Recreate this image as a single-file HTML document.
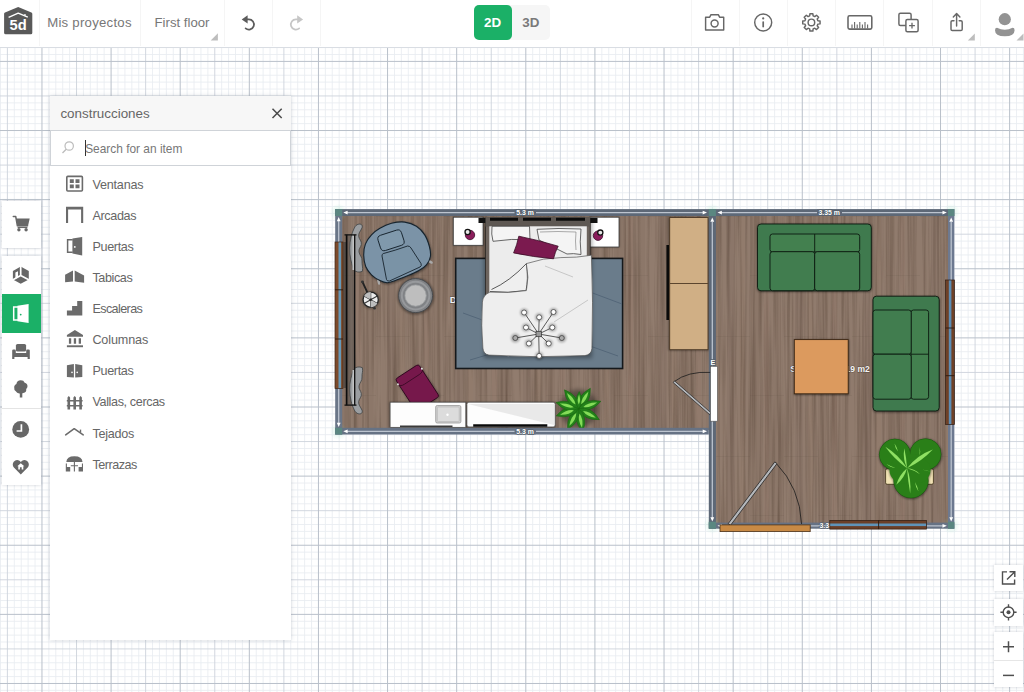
<!DOCTYPE html>
<html lang="es"><head><meta charset="utf-8"><title>Planner 5D</title>
<style>
*{box-sizing:border-box;margin:0;padding:0}
html,body{width:1024px;height:692px;overflow:hidden;background:#fff}
body{position:relative;font-family:"Liberation Sans",sans-serif;color:#777}
svg{display:block}
.grid,.plan{position:absolute;left:0;top:0}
.topbar{position:absolute;left:0;top:0;width:1024px;height:47.6px;background:#fff;border-bottom:1.6px solid #d9dde3}
.topbar .sep{position:absolute;top:0;width:1px;height:46px;background:#f5f5f5}
.topbar .txt{position:absolute;top:15.2px;font-size:13.2px;line-height:16px;color:#777;white-space:nowrap}
.topbar .ico{position:absolute}
.tri{position:absolute;width:0;height:0;border-left:5.5px solid transparent;border-bottom:5.5px solid #bdbdbd}
.mode{position:absolute;left:473.5px;top:5px;width:76.5px;height:34.5px;border-radius:5px;background:#f6f6f6}
.mode .b2{position:absolute;left:0;top:0;width:38.3px;height:34.5px;border-radius:5px;background:#1bb067;color:#fff;font-weight:bold;font-size:13.4px;line-height:36.8px;text-align:center}
.mode .b3{position:absolute;left:38.3px;top:0;width:38.2px;height:34.5px;color:#7a7a7a;font-weight:bold;font-size:13.4px;line-height:36.8px;text-align:center}
.box{position:absolute;background:#fff;box-shadow:0 0 3px rgba(80,90,110,.28)}
.panel{position:absolute;left:49.8px;top:96px;width:240.8px;height:544px;background:#fff;box-shadow:0 0 4px rgba(80,90,110,.25)}
.panel .hd{position:absolute;left:0;top:0;width:100%;height:34px;background:#f7f7f7;color:#666;font-size:13.4px;line-height:16px;padding:10.3px 0 0 10.6px}
.panel .search{position:absolute;left:0;top:33.6px;width:100%;height:36px;border:1px solid #cfd3d8;background:#fff}
.panel .search span{position:absolute;left:34.4px;top:11.1px;font-size:11.9px;line-height:14px;color:#777;white-space:nowrap}
.panel .caret{position:absolute;left:34.3px;top:9px;width:1px;height:16px;background:#333}
.item{position:absolute;left:0;width:100%;height:31px}
.item svg{position:absolute;left:15px;top:6.5px}
.item span{position:absolute;left:42.6px;top:8.8px;font-size:12.6px;line-height:15px;color:#666;white-space:nowrap}

</style></head>
<body>
<svg class="grid" width="1024" height="692" viewBox="0 0 1024 692"><path d="M0.49 46V692M14.31 46V692M21.22 46V692M28.14 46V692M35.05 46V692M48.87 46V692M55.78 46V692M62.70 46V692M69.61 46V692M83.43 46V692M90.34 46V692M97.26 46V692M104.17 46V692M117.99 46V692M124.90 46V692M131.82 46V692M138.73 46V692M152.55 46V692M159.46 46V692M166.38 46V692M173.29 46V692M187.11 46V692M194.02 46V692M200.94 46V692M207.85 46V692M221.67 46V692M228.58 46V692M235.50 46V692M242.41 46V692M256.23 46V692M263.14 46V692M270.06 46V692M276.97 46V692M290.79 46V692M297.70 46V692M304.62 46V692M311.53 46V692M325.35 46V692M332.26 46V692M339.18 46V692M346.09 46V692M359.91 46V692M366.82 46V692M373.74 46V692M380.65 46V692M394.47 46V692M401.38 46V692M408.30 46V692M415.21 46V692M429.03 46V692M435.94 46V692M442.86 46V692M449.77 46V692M463.59 46V692M470.50 46V692M477.42 46V692M484.33 46V692M498.15 46V692M505.06 46V692M511.98 46V692M518.89 46V692M532.71 46V692M539.62 46V692M546.54 46V692M553.45 46V692M567.27 46V692M574.18 46V692M581.10 46V692M588.01 46V692M601.83 46V692M608.74 46V692M615.66 46V692M622.57 46V692M636.39 46V692M643.30 46V692M650.22 46V692M657.13 46V692M670.95 46V692M677.86 46V692M684.78 46V692M691.69 46V692M705.51 46V692M712.42 46V692M719.34 46V692M726.25 46V692M740.07 46V692M746.98 46V692M753.90 46V692M760.81 46V692M774.63 46V692M781.54 46V692M788.46 46V692M795.37 46V692M809.19 46V692M816.10 46V692M823.02 46V692M829.93 46V692M843.75 46V692M850.66 46V692M857.58 46V692M864.49 46V692M878.31 46V692M885.22 46V692M892.14 46V692M899.05 46V692M912.87 46V692M919.78 46V692M926.70 46V692M933.61 46V692M947.43 46V692M954.34 46V692M961.26 46V692M968.17 46V692M981.99 46V692M988.90 46V692M995.82 46V692M1002.73 46V692M1016.55 46V692M1023.46 46V692M0 47.58H1024M0 54.49H1024M0 68.31H1024M0 75.22H1024M0 82.14H1024M0 89.05H1024M0 102.87H1024M0 109.78H1024M0 116.70H1024M0 123.61H1024M0 137.43H1024M0 144.34H1024M0 151.26H1024M0 158.17H1024M0 171.99H1024M0 178.90H1024M0 185.82H1024M0 192.73H1024M0 206.55H1024M0 213.46H1024M0 220.38H1024M0 227.29H1024M0 241.11H1024M0 248.02H1024M0 254.94H1024M0 261.85H1024M0 275.67H1024M0 282.58H1024M0 289.50H1024M0 296.41H1024M0 310.23H1024M0 317.14H1024M0 324.06H1024M0 330.97H1024M0 344.79H1024M0 351.70H1024M0 358.62H1024M0 365.53H1024M0 379.35H1024M0 386.26H1024M0 393.18H1024M0 400.09H1024M0 413.91H1024M0 420.82H1024M0 427.74H1024M0 434.65H1024M0 448.47H1024M0 455.38H1024M0 462.30H1024M0 469.21H1024M0 483.03H1024M0 489.94H1024M0 496.86H1024M0 503.77H1024M0 517.59H1024M0 524.50H1024M0 531.42H1024M0 538.33H1024M0 552.15H1024M0 559.06H1024M0 565.98H1024M0 572.89H1024M0 586.71H1024M0 593.62H1024M0 600.54H1024M0 607.45H1024M0 621.27H1024M0 628.18H1024M0 635.10H1024M0 642.01H1024M0 655.83H1024M0 662.74H1024M0 669.66H1024M0 676.57H1024M0 690.39H1024" stroke="#e8ecf1" stroke-width=".85" fill="none"/><path d="M7.40 46V692M76.52 46V692M145.64 46V692M214.76 46V692M283.88 46V692M353.00 46V692M422.12 46V692M491.24 46V692M560.36 46V692M629.48 46V692M698.60 46V692M767.72 46V692M836.84 46V692M905.96 46V692M975.08 46V692M0 95.96H1024M0 165.08H1024M0 234.20H1024M0 303.32H1024M0 372.44H1024M0 441.56H1024M0 510.68H1024M0 579.80H1024M0 648.92H1024" stroke="#cdd3db" stroke-width=".9" fill="none"/><path d="M41.96 46V692M111.08 46V692M180.20 46V692M249.32 46V692M318.44 46V692M387.56 46V692M456.68 46V692M525.80 46V692M594.92 46V692M664.04 46V692M733.16 46V692M802.28 46V692M871.40 46V692M940.52 46V692M1009.64 46V692M0 61.40H1024M0 130.52H1024M0 199.64H1024M0 268.76H1024M0 337.88H1024M0 407.00H1024M0 476.12H1024M0 545.24H1024M0 614.36H1024M0 683.48H1024" stroke="#b9c0ca" stroke-width="1" fill="none"/></svg>
<svg class="plan" width="1024" height="692" viewBox="0 0 1024 692" font-family="Liberation Sans, sans-serif">
<defs>
  <pattern id="wood" width="68" height="120" patternUnits="userSpaceOnUse" x="342" y="216">
    <rect width="68" height="120" fill="#907b6d"/>
    <rect x="0" width="9" height="120" fill="#7f6b5d" opacity=".3"/>
    <rect x="14" width="5" height="120" fill="#92796a" opacity=".3"/>
    <rect x="24" width="7" height="120" fill="#806b5e" opacity=".28"/>
    <rect x="36" width="4" height="120" fill="#947c6d" opacity=".28"/>
    <rect x="45" width="8" height="120" fill="#7e695c" opacity=".28"/>
    <rect x="58" width="5" height="120" fill="#917868" opacity=".28"/>
    <rect x="0" y="59" width="34" height="1" fill="#7a6658" opacity=".28"/>
    <rect x="34" y="0" width="34" height="1" fill="#7a6658" opacity=".28"/>
  </pattern>
  <radialGradient id="halo"><stop offset="0" stop-color="#7fd6b0" stop-opacity=".3"/><stop offset="1" stop-color="#7fd6b0" stop-opacity="0"/></radialGradient>
  <filter id="sh" x="-20%" y="-20%" width="140%" height="140%"><feGaussianBlur stdDeviation="1.2"/></filter>
  <filter id="sh2" x="-30%" y="-30%" width="160%" height="160%"><feGaussianBlur stdDeviation="2"/></filter>
  <filter id="grain" x="0" y="0" width="100%" height="100%" color-interpolation-filters="sRGB">
    <feTurbulence type="fractalNoise" baseFrequency="0.32 0.006" numOctaves="3" seed="7" result="n"/>
    <feColorMatrix in="n" type="matrix" values="0 0 0 0 0.25  0 0 0 0 0.18  0 0 0 0 0.13  0.75 0 0 0 -0.3"/>
    <feComposite in2="SourceGraphic" operator="in"/>
  </filter>
</defs>
<!-- floors -->
<rect x="340" y="214" width="372" height="216" fill="url(#wood)"/>
<rect x="712" y="214" width="239" height="312" fill="url(#wood)"/>
<rect x="340" y="214" width="372" height="216" fill="#fff" filter="url(#grain)"/>
<rect x="712" y="214" width="239" height="312" fill="#fff" filter="url(#grain)"/>
<g font-size="9.5" font-weight="bold" fill="#f4f4f4" stroke="#5a4a40" stroke-width=".9" paint-order="stroke">
<text x="449.7" y="302.8">D</text>
<text x="790.2" y="372">S</text>
<text x="845.6" y="372" textLength="24.2" lengthAdjust="spacingAndGlyphs">19 m2</text>
</g>
<!-- curtains & rod -->
<g>
<rect x="343.500" y="242" width="2.500" height="146" fill="#333" opacity=".55"/><rect x="346.400" y="234.700" width="8.500" height="170.600" fill="#4c4c4c" opacity=".42"/>
<g fill="#9b9ea1" stroke="#3f4244" stroke-width=".8">
<path d="M358 224.300c3.200-.9 5 1 4 3.600c-1.400 3.200-3.800 5.200-3.300 8.600c.4 3 3.200 4.400 2.600 8c-.5 3-2.800 4.200-2.300 7.500c.5 3.500 3.400 5 3 9c-.3 3.500 1.200 6.500 .4 10.300c-3 1.500-6.600 .8-8.400-1.300c-2.500-6-4.600-14-4.300-22c.2-8 2-15 4.600-20c1-2 2.300-3.200 3.700-3.700z"/>
<path d="M358 413.700c3.200 .9 5-1 4-3.600c-1.400-3.200-3.800-5.200-3.300-8.600c.4-3 3.200-4.400 2.600-8c-.5-3-2.800-4.200-2.300-7.500c.5-3.500 3.400-5 3-9c-.3-3.500 1.200-5.500 .4-9.300c-3-1.500-6.600-.8-8.400 1.300c-2.500 6-4.600 13-4.300 21c.2 8 2 15 4.600 20c1 2 2.300 3.200 3.700 3.700z"/>
</g>
<path d="M353.600 236v34M353.600 370v34" stroke="#c2c3c4" stroke-width="2.200"/>
<path d="M346.600 234.700V405.300" stroke="#0c0c0c" stroke-width="1.700"/><path d="M354.700 234.700V405.300" stroke="#0c0c0c" stroke-width="1.300"/>
<path d="M344.500 234.900h12M344.500 405.100h12" stroke="#111" stroke-width="1.300"/>
</g>
<!-- armchair -->
<g>
<path d="M363.7 254.9C363.7 251.1 364.1 247.4 365.4 244.1C366.7 240.7 369.1 237.5 371.5 234.9C374.0 232.3 376.5 230.2 379.9 228.3C383.2 226.3 387.3 224.3 391.5 223.3C395.6 222.3 400.6 221.6 404.8 222.1C408.9 222.6 413.1 224.1 416.4 226.3C419.7 228.4 422.6 231.5 424.7 234.9C426.9 238.3 428.4 242.9 429.4 246.5C430.3 250.1 430.9 253.5 430.4 256.5C429.9 259.6 428.3 262.5 426.4 264.8C424.5 267.2 422.0 268.8 418.9 270.6C415.9 272.4 411.9 274.1 408.1 275.6C404.4 277.2 399.9 278.9 396.5 280.1C393.0 281.3 390.1 282.7 387.3 282.8C384.6 282.9 382.5 281.9 379.9 280.6C377.2 279.3 373.9 277.2 371.5 274.8C369.2 272.4 367.0 269.8 365.7 266.5C364.4 263.2 363.8 258.6 363.7 254.9Z" transform="translate(.6 1)" fill="#000" stroke="#000" stroke-width="1.5" opacity=".4" filter="url(#sh)"/>
<path d="M428.600 260.800l3 1.800M378.300 280.500l.8 3" stroke="#a9a9a9" stroke-width="2.400" stroke-linecap="round"/>
<path d="M363.7 254.9C363.7 251.1 364.1 247.4 365.4 244.1C366.7 240.7 369.1 237.5 371.5 234.9C374.0 232.3 376.5 230.2 379.9 228.3C383.2 226.3 387.3 224.3 391.5 223.3C395.6 222.3 400.6 221.6 404.8 222.1C408.9 222.6 413.1 224.1 416.4 226.3C419.7 228.4 422.6 231.5 424.7 234.9C426.9 238.3 428.4 242.9 429.4 246.5C430.3 250.1 430.9 253.5 430.4 256.5C429.9 259.6 428.3 262.5 426.4 264.8C424.5 267.2 422.0 268.8 418.9 270.6C415.9 272.4 411.9 274.1 408.1 275.6C404.4 277.2 399.9 278.9 396.5 280.1C393.0 281.3 390.1 282.7 387.3 282.8C384.6 282.9 382.5 281.9 379.9 280.6C377.2 279.3 373.9 277.2 371.5 274.8C369.2 272.4 367.0 269.8 365.7 266.5C364.4 263.2 363.8 258.6 363.7 254.9Z" fill="#7b93a7" stroke="#17242e" stroke-width="1.100"/>
<rect x="-12.300" y="-8" width="24.600" height="16" rx="4" transform="translate(391 240.300) rotate(-17.800)" fill="#8099ac" stroke="#17242e" stroke-width=".9"/>
<path d="M383.200 253.600Q395 250.500 407.600 246Q410 246 411 248L421 263.500Q422 266 420 267L389.500 281Q387 281.500 386.500 279.500L382 256Q381.800 254.200 383.200 253.600Z" fill="#7a93a6" stroke="#17242e" stroke-width=".9"/>
</g>
<!-- pouf -->
<g>
<circle cx="415.800" cy="296.200" r="18.500" fill="#000" opacity=".35" filter="url(#sh)"/>
<circle cx="415.600" cy="295.600" r="17" fill="#808285" stroke="#4a4c4f" stroke-width="1"/>
<circle cx="415.600" cy="295.600" r="13.800" fill="none" stroke="#97999c" stroke-width="2"/>
<circle cx="415.600" cy="295.600" r="10.600" fill="#bebebe" stroke="#a2a4a6" stroke-width=".8"/>
</g>
<!-- floor lamp -->
<g>
<circle cx="370.900" cy="299.900" r="9" fill="#000" opacity=".3" filter="url(#sh)"/>
<path d="M362.300 281.500L370.700 299.700" stroke="#222" stroke-width="1.800"/>
<circle cx="362.400" cy="281.800" r="1.400" fill="#333"/>
<circle cx="370.700" cy="299.700" r="7.600" fill="#ededed" stroke="#262626" stroke-width="1.300"/>
<path d="M370.700 292.100V307.300M364.100 295.900L377.300 303.500M364.100 303.500L377.300 295.900" stroke="#3a3a3a" stroke-width="1.100"/>
<path d="M370.700 299.700L364.100 295.900A7.600 7.600 0 0 1 370.700 292.100ZM370.700 299.700L377.300 303.500A7.600 7.600 0 0 1 370.700 307.300Z" fill="#bdbdbd"/>
<circle cx="370.700" cy="299.700" r="1.300" fill="#222"/>
<circle cx="374.500" cy="308.200" r="1.300" fill="#333"/>
</g>
<!-- rug -->
<g>
<rect x="455.700" y="258.400" width="166.900" height="110.100" fill="#6a7c8b" stroke="#15181b" stroke-width="1.600"/>
<path d="M463 313l22 8M590 292l32 12M590 346l28 10M470 360l20-6" stroke="#4f6275" stroke-width="1" opacity=".8"/>
</g>
<!-- nightstands -->
<g>
<rect x="453" y="217.200" width="30.300" height="28.300" fill="#000" opacity=".35" filter="url(#sh)"/>
<rect x="453.300" y="217.200" width="29.800" height="28.100" fill="#fff" stroke="#3a3a3a" stroke-width=".8"/>
<rect x="589.400" y="217.200" width="30" height="30" fill="#000" opacity=".35" filter="url(#sh)"/>
<rect x="589.700" y="217.200" width="29.300" height="29.800" fill="#fff" stroke="#3a3a3a" stroke-width=".8"/>
<circle cx="470" cy="235" r="4.700" fill="#8b1d5c" stroke="#3a0d28" stroke-width=".8"/>
<circle cx="467.600" cy="232" r="2.600" fill="#e8e8e8" stroke="#111" stroke-width="1.300"/>
<circle cx="598" cy="235.700" r="4.700" fill="#8b1d5c" stroke="#3a0d28" stroke-width=".8"/>
<circle cx="600.300" cy="232.600" r="2.600" fill="#e8e8e8" stroke="#111" stroke-width="1.300"/>
</g>
<!-- bed -->
<g>
<rect x="484" y="218" width="108" height="140" fill="#000" opacity=".35" filter="url(#sh2)"/>
<rect x="485.500" y="218.300" width="104.700" height="120" fill="#6d645e" stroke="#2b2724" stroke-width=".8"/>
<rect x="478.500" y="217.800" width="8" height="5.200" fill="#111"/><rect x="589.500" y="217.800" width="8" height="5.200" fill="#111"/>
<rect x="485.500" y="217" width="104.700" height="9.600" fill="#5e5853"/>
<path d="M490 219.200h28M523 219.200h28M556 219.200h29" stroke="#0c0c0c" stroke-width="3"/>
<rect x="489.300" y="226.300" width="97.500" height="112" fill="#ececec"/>
<!-- pillows -->
<path d="M492 226.300h37.500l.5 13.500q-18 -1.500-37 1.500q-2-7-1-15z" fill="#f4f4f4" stroke="#444" stroke-width=".8"/>
<path d="M537 229.300q22-1.500 44 -.3q-1.500 13 0 25.500q-8-1.500-14-.5l-28 -14z" fill="#f4f4f4" stroke="#444" stroke-width=".8"/>
<path d="M540 232q18-1 36 0q-1 9 0 18" fill="none" stroke="#777" stroke-width=".6"/>
<!-- sheet fold lines -->
<path d="M491.500 289.500q18-8 35-26q2 16-.5 27q-18 3-36 1" fill="#efefef" stroke="#333" stroke-width=".8"/>
<!-- duvet -->
<path d="M590.900 255.300q-14 2.500-30 2.300q-18 .2-34.500 6q3 14 0 27q-18 3-36.500 1.500q-7 3-7.500 10q-1.500 24 .5 46q.5 6 6 7q48 3 96 .5q6.500-1 7-7q1.500-46-.5-93z" fill="#eeeeee" stroke="#555" stroke-width=".7"/>
<path d="M545 266l28 11M588 300l-34 22" stroke="#bdbdbd" stroke-width=".8" fill="none"/>
<!-- purple pillow -->
<path d="M518.800 236.200Q538 240 558.200 246.200Q555 252 553.500 258.800Q533 257 513.600 252.900Q517 245 518.800 236.200Z" fill="#7b1a4f" stroke="#3a0d26" stroke-width=".8"/>
</g>
<!-- chandelier -->
<g>
<g fill="#000" opacity=".28" filter="url(#sh)">
<circle cx="524.100" cy="312.500" r="4"/><circle cx="539.200" cy="317.300" r="4"/><circle cx="553.500" cy="312" r="4"/><circle cx="526" cy="327.500" r="4"/><circle cx="552.300" cy="327.500" r="4"/><circle cx="515.300" cy="338" r="4.500"/><circle cx="561.800" cy="338" r="4.500"/><circle cx="528.900" cy="343.500" r="4"/><circle cx="548.700" cy="343.500" r="4"/><circle cx="539.200" cy="355.900" r="4"/>
</g>
<path d="M538.700 334L524.100 312.500M538.700 334L539.200 317.300M538.700 334L553.500 312M538.700 334L526 327.500M538.700 334L552.300 327.500M538.700 334L515.300 338M538.700 334L561.800 338M538.700 334L528.900 343.500M538.700 334L548.700 343.500M538.700 334L539.200 355.900" stroke="#333" stroke-width=".8" fill="none"/>
<rect x="536" y="331.300" width="5.400" height="5.400" fill="#999" stroke="#333" stroke-width=".7"/>
<g fill="#fff" stroke="#333" stroke-width=".7">
<circle cx="524.100" cy="312.500" r="2.500"/><circle cx="539.200" cy="317.300" r="2.500"/><circle cx="553.500" cy="312" r="2.500"/><circle cx="526" cy="327.500" r="2.500"/><circle cx="552.300" cy="327.500" r="2.500"/><circle cx="528.900" cy="343.500" r="2.500"/><circle cx="548.700" cy="343.500" r="2.500"/><circle cx="539.200" cy="355.900" r="2.500"/>
</g>
<circle cx="515.300" cy="338" r="2.500" fill="#aaa" stroke="#333" stroke-width=".7"/><circle cx="561.800" cy="338" r="2.500" fill="#aaa" stroke="#333" stroke-width=".7"/>
</g>
<!-- purple chair -->
<g transform="translate(417.300 387.800) rotate(-33)">
<rect x="-14" y="-18.700" width="28.500" height="39" rx="2.500" fill="#000" opacity=".4" filter="url(#sh)"/>
<rect x="-13.800" y="-19.200" width="27.600" height="38.400" rx="2.500" fill="#76184b" stroke="#320a20" stroke-width=".9"/>
<path d="M-13.800-11.500q2.500 1.800 5 1.500h17.600q2.500.3 5-1.500" fill="none" stroke="#3f0b28" stroke-width=".9"/>
<circle cx="-14.300" cy="-13.500" r="1" fill="#ddd"/><circle cx="14.300" cy="-13.500" r="1" fill="#ddd"/>
</g>
<!-- desk + tv stand -->
<g>
<rect x="389.500" y="402" width="166.500" height="26.500" fill="#000" opacity=".4" filter="url(#sh)"/>
<rect x="390.100" y="402.200" width="75.700" height="25.100" fill="#fdfdfd" stroke="#4a4a4a" stroke-width=".7"/>
<path d="M400 426.300H452.500" stroke="#3a3a3a" stroke-width="1.600"/>
<rect x="435.700" y="405.500" width="25.200" height="17.500" rx="1.500" fill="#cfcfcf" stroke="#9a9a9a" stroke-width=".8"/>
<rect x="437.400" y="407" width="21.800" height="14.500" rx="1" fill="#dcdcdc" stroke="#b5b5b5" stroke-width=".6"/>
<circle cx="447.500" cy="414.700" r="1.200" fill="#fff"/>
<rect x="466.900" y="402.200" width="88.300" height="24.700" rx="2" fill="#fdfdfd" stroke="#4a4a4a" stroke-width=".7"/>
<path d="M468 404l86 21v-21z" fill="#d9d9d9" opacity=".55"/>
<path d="M473.200 425.500H547.300" stroke="#0a0a0a" stroke-width="2.600"/>
</g>
<!-- plant 1 (spiky) -->
<g transform="translate(578.600 408.600)">
<circle r="19" fill="#000" opacity=".35" filter="url(#sh2)"/>
<g fill="#23801a" stroke="#1a6410" stroke-width=".5">
<path d="M0 0Q-8.5-9.500 0-23.500Q8.500-9.500 0 0Z" transform="rotate(30)"/><path d="M0 0Q-8.5-9.500 0-23.500Q8.500-9.500 0 0Z" transform="rotate(72)"/><path d="M0 0Q-8.5-9.500 0-23.500Q8.500-9.500 0 0Z" transform="rotate(118)"/><path d="M0 0Q-8.5-9.500 0-23.500Q8.500-9.500 0 0Z" transform="rotate(170)"/><path d="M0 0Q-8.5-9.500 0-23.500Q8.500-9.500 0 0Z" transform="rotate(208)"/><path d="M0 0Q-8.5-9.500 0-23.500Q8.500-9.500 0 0Z" transform="rotate(252)"/><path d="M0 0Q-8.5-9.500 0-23.500Q8.500-9.500 0 0Z" transform="rotate(285)"/><path d="M0 0Q-8.5-9.500 0-23.500Q8.500-9.500 0 0Z" transform="rotate(323)"/><path d="M0 0Q-6-7 0-17Q6-7 0 0Z" transform="rotate(2)"/>
</g>
<g fill="#84dc58">
<path d="M0-5Q-3.300-11 0-19.500Q3.300-11 0-5Z" transform="rotate(30)"/><path d="M0-5Q-3.300-11 0-19.500Q3.300-11 0-5Z" transform="rotate(72)"/><path d="M0-5Q-3.300-11 0-19.500Q3.300-11 0-5Z" transform="rotate(118)"/><path d="M0-5Q-3.300-11 0-19.500Q3.300-11 0-5Z" transform="rotate(170)"/><path d="M0-5Q-3.300-11 0-19.500Q3.300-11 0-5Z" transform="rotate(208)"/><path d="M0-5Q-3.300-11 0-19.500Q3.300-11 0-5Z" transform="rotate(252)"/><path d="M0-5Q-3.300-11 0-19.500Q3.300-11 0-5Z" transform="rotate(285)"/><path d="M0-5Q-3.300-11 0-19.500Q3.300-11 0-5Z" transform="rotate(323)"/><path d="M0-4Q-2.400-8 0-14Q2.400-8 0-4Z" transform="rotate(2)"/>
</g>
</g>
<!-- wardrobe -->
<g>
<rect x="668.500" y="217" width="40.500" height="133.500" fill="#000" opacity=".4" filter="url(#sh)"/>
<path d="M667.700 245V320" stroke="#0a0a0a" stroke-width="2.600"/>
<rect x="669.700" y="217.500" width="38.300" height="132.200" fill="#d0af85" stroke="#4a3724" stroke-width=".9"/>
<path d="M669.700 283.500h38.300" stroke="#5b452e" stroke-width="1"/>
</g>
<!-- sofa 1 -->
<g>
<rect x="757" y="224" width="115" height="68" rx="4" fill="#000" opacity=".45" filter="url(#sh)"/>
<rect x="757.500" y="224" width="113.800" height="66.800" rx="3.500" fill="#3f7a4e" stroke="#0c1a10" stroke-width=".9"/>
<rect x="770" y="234" width="89.700" height="18" rx="2.500" fill="#43804f" stroke="#0c1a10" stroke-width=".9"/>
<rect x="770" y="251.700" width="44.700" height="39" rx="2.500" fill="#417d4f" stroke="#0c1a10" stroke-width=".9"/>
<rect x="814.700" y="251.700" width="45" height="39" rx="2.500" fill="#417d4f" stroke="#0c1a10" stroke-width=".9"/>
<path d="M814.700 234v18" stroke="#0c1a10" stroke-width=".9"/>
</g>
<!-- sofa 2 -->
<g>
<rect x="873" y="296.500" width="67" height="116" rx="4" fill="#000" opacity=".45" filter="url(#sh)"/>
<rect x="873" y="296.200" width="66.200" height="114.800" rx="3.500" fill="#3f7a4e" stroke="#0c1a10" stroke-width=".9"/>
<rect x="911" y="310" width="17.600" height="89.200" rx="2.500" fill="#43804f" stroke="#0c1a10" stroke-width=".9"/>
<rect x="873" y="310" width="38.200" height="44.200" rx="2.500" fill="#417d4f" stroke="#0c1a10" stroke-width=".9"/>
<rect x="873" y="354.200" width="38.200" height="45" rx="2.500" fill="#417d4f" stroke="#0c1a10" stroke-width=".9"/>
<path d="M911 354.200h17.600" stroke="#0c1a10" stroke-width=".9"/>
</g>
<!-- table -->
<g>
<rect x="794" y="339.500" width="55" height="55.500" fill="#000" opacity=".45" filter="url(#sh)"/>
<rect x="794.300" y="339.600" width="53.900" height="54.200" fill="#dc9a5e" stroke="#3a2513" stroke-width=".9"/>
</g>
<!-- plant 2 -->
<g>
<rect x="885.600" y="468.700" width="47.800" height="15.600" rx="1.500" fill="#f1e2b4" stroke="#4a3c22" stroke-width=".9"/>
<g fill="#000" opacity=".45" filter="url(#sh)"><circle cx="895.200" cy="455.500" r="16.300"/><circle cx="925.800" cy="455" r="16.300"/><circle cx="911.200" cy="481.500" r="17.800"/><circle cx="903.300" cy="470.800" r="14"/><circle cx="917.800" cy="470.800" r="13.500"/></g>
<g fill="#2a7f18" stroke="#1c5a10" stroke-width=".8"><circle cx="894.900" cy="454.600" r="15.500"/><circle cx="925.500" cy="454.300" r="15.500"/><circle cx="911" cy="480.700" r="17.200"/></g>
<g fill="#2a7f18"><circle cx="894.900" cy="454.600" r="15.100"/><circle cx="925.500" cy="454.300" r="15.100"/><circle cx="911" cy="480.700" r="16.800"/><path d="M894.900 454.600L925.500 454.300L911 480.700Z"/><circle cx="903" cy="470" r="13.500"/><circle cx="917.500" cy="470" r="13"/></g>
<g fill="#8fe063">
<path d="M907 468.200Q894 459 885.300 446.800Q899 455 907 468.200Z"/>
<path d="M907 468.200Q922 461 932.800 449.400Q917 455 907 468.200Z"/>
<path d="M907 468.200Q906.500 458 904.300 448.300Q902.500 459 907 468.200Z"/>
<path d="M907 468.200Q899 475 896.300 484.800Q904.500 478 907 468.200Z"/>
<path d="M907 468.200Q908 481 910.200 493.500Q911.500 480 907 468.200Z"/>
<path d="M907 468.200Q914 470 920 474.300Q915 468.500 907 468.200Z"/>
<path d="M894.500 443.500q2.500 3.500 3.500 8q-3-3.500-3.500-8zM919.500 447q.6 4.500-.3 9q1.800-4.500.3-9zM886.500 464q4.500 2.500 9 4q-5.500-.5-9-4zM931 471.500q-4.500-.3-9-2q4.500 .8 9 2zM915 482q2.500 4.500 3.500 9.500q-3-4.500-3.500-9.500zM904 481q-1.300 4.500-1.500 9q.2-4.500 1.500-9zM939 454q-3.500 2-7.500 3q4-.8 7.500-3z"/>
</g>
</g>

<!-- corner halos -->
<g>
<circle cx="338.5" cy="212.5" r="9" fill="url(#halo)"/><circle cx="712.3" cy="212.5" r="9" fill="url(#halo)"/><circle cx="951.2" cy="212.5" r="9" fill="url(#halo)"/>
<circle cx="338.5" cy="431.3" r="9" fill="url(#halo)"/><circle cx="712.3" cy="525" r="9" fill="url(#halo)"/><circle cx="951.2" cy="525" r="9" fill="url(#halo)"/>
</g>
<!-- walls -->
<g>
<rect x="335.2" y="209.1" width="619.1" height="6.9" fill="#5d6877"/>
<rect x="335.2" y="209.1" width="7" height="225.4" fill="#6a7688"/>
<rect x="335.2" y="427.8" width="373.6" height="6.7" fill="#667284"/>
<rect x="708.8" y="209.1" width="7.1" height="319.6" fill="#5d6877"/>
<rect x="708.8" y="522.6" width="245.5" height="6.1" fill="#667284"/>
<rect x="948" y="209.1" width="6.3" height="319.6" fill="#6d7990"/>
</g>
<!-- dimension lines -->
<g stroke="#bcc4cf" stroke-width="1.3" fill="none">
<path d="M346 212.6H704" /><path d="M720 212.6H944"/>
<path d="M338.7 220V424"/><path d="M712.3 222V519"/><path d="M951.2 222V519"/>
<path d="M346 431.3H704"/><path d="M720 525.8H944"/>
</g>
<g fill="#fff">
<path d="M343.3 212.6l4.3-1.9v3.8z"/><path d="M707 212.6l-4.3-1.9v3.8z"/>
<path d="M717.5 212.6l4.3-1.9v3.8z"/><path d="M946.8 212.6l-4.3-1.9v3.8z"/>
<path d="M338.7 217l-1.9 4.3h3.8z"/><path d="M338.7 427l-1.9-4.3h3.8z"/>
<path d="M712.3 217.5l-1.9 4.3h3.8z"/><path d="M712.3 521.5l-1.9-4.3h3.8z"/>
<path d="M951.2 217.5l-1.9 4.3h3.8z"/><path d="M951.2 521.5l-1.9-4.3h3.8z"/>
<path d="M343.3 431.3l4.3-1.9v3.8z"/><path d="M707 431.3l-4.3-1.9v3.8z"/>
<path d="M717.5 525.8l4.3-1.9v3.8z"/><path d="M946.8 525.8l-4.3-1.9v3.8z"/>
</g>
<!-- corner nodes -->
<g fill="#5a8781">
<rect x="335.2" y="209.1" width="7" height="6.9"/><rect x="708.8" y="209.1" width="7.1" height="6.9"/><rect x="948" y="209.1" width="6.3" height="6.9"/>
<rect x="335.2" y="427.8" width="7" height="6.7"/><rect x="708.8" y="521.8" width="7.1" height="6.9"/><rect x="948" y="521.8" width="6.3" height="6.9"/>
</g>
<!-- left window room 1 -->
<g>
<rect x="335" y="242" width="8" height="146.4" fill="#7c4a2b"/>
<rect x="338.5" y="242" width="2.6" height="146.4" fill="#6698b7"/>
<rect x="335" y="242" width="8" height="146.4" fill="none" stroke="#3a2416" stroke-width=".7"/>
<path d="M335 289.8h8M335 339h8" stroke="#2a1a10" stroke-width=".9"/>
</g>
<!-- right window room 2 -->
<g>
<rect x="945.6" y="280" width="8.8" height="144.5" fill="#6e4127"/>
<rect x="948.8" y="280" width="2.6" height="144.5" fill="#5d8db3"/>
<rect x="945.6" y="280" width="8.8" height="144.5" fill="none" stroke="#2e1c12" stroke-width=".7"/>
<path d="M945.6 328h8.8M945.6 375.7h8.8" stroke="#2a1a10" stroke-width=".9"/>
</g>
<!-- bottom window room 2 -->
<g>
<rect x="829.8" y="520.4" width="96.7" height="8.7" fill="#6b3f27"/>
<rect x="829.8" y="523.5" width="96.7" height="2.6" fill="#5f93b8"/>
<rect x="829.8" y="520.4" width="96.7" height="8.7" fill="none" stroke="#2e1c12" stroke-width=".7"/>
<path d="M878.6 520.4v8.7" stroke="#2a1a10" stroke-width=".9"/>
</g>
<!-- entrance door -->
<g>
<path d="M775.8 462.8Q800 488 801.6 524" fill="none" stroke="#1c1c1c" stroke-width=".8"/>
<path d="M728.2 523.6L774.8 461.9L777 463.6L730.6 525.2Z" fill="#b4b7bb" stroke="#262626" stroke-width=".8"/>
<rect x="720" y="524.9" width="90.2" height="6.7" fill="#c88a45" stroke="#4a3018" stroke-width=".8"/>
</g>
<!-- interior door -->
<g>
<path d="M673.9 381.8Q688 371 710.6 372.4" fill="none" stroke="#1c1c1c" stroke-width=".8"/>
<path d="M710.8 412.6L674.6 380.9L673.2 382.6L709.6 414.6Z" fill="#b4b7bb" stroke="#262626" stroke-width=".7"/>
<rect x="710.6" y="366.3" width="6.8" height="54.9" fill="#fff" stroke="#555" stroke-width=".6"/>
</g>

<!-- labels -->
<g font-size="6.9" font-weight="bold" fill="#fff" stroke="#56616d" stroke-width="1.4" paint-order="stroke" text-anchor="middle">
<rect x="514.5" y="209.4" width="21.5" height="6.4" fill="#5d6877" stroke="none"/>
<text x="525.1" y="215">5.3 m</text>
<rect x="817" y="209.4" width="25" height="6.4" fill="#5d6877" stroke="none"/>
<text x="829.2" y="215">3.35 m</text>
<rect x="514.5" y="428.1" width="21.5" height="6.2" fill="#667284" stroke="none"/>
<text x="525.1" y="433.8">5.3 m</text>
<text x="824.3" y="528.3">3.3</text>
<text x="713" y="365.4" font-size="7.2">E</text>
</g>
</svg>

<div class="topbar">
  <div class="sep" style="left:39px"></div><div class="sep" style="left:139.9px"></div><div class="sep" style="left:223.6px"></div><div class="sep" style="left:271.9px"></div><div class="sep" style="left:319.8px"></div>
  <div class="sep" style="left:691.4px"></div><div class="sep" style="left:738.6px"></div><div class="sep" style="left:786.8px"></div><div class="sep" style="left:835.2px"></div><div class="sep" style="left:883.3px"></div><div class="sep" style="left:932.2px"></div><div class="sep" style="left:980.4px"></div>
  <div class="txt" style="left:47.2px;letter-spacing:.25px">Mis proyectos</div>
  <div class="txt" style="left:154.5px">First floor</div>
  <svg class="ico" style="left:0;top:0" width="1024" height="46" viewBox="0 0 1024 46" font-family="Liberation Sans, sans-serif">
    <!-- logo -->
    <path d="M18.2 7L31.4 12.6Q32.3 13 32.3 14V32.8Q32.3 34.3 30.8 34.3H5.6Q4.1 34.3 4.1 32.8V14Q4.1 13 5 12.6Z" fill="#595959"/>
    <path d="M8.6 17.3L18.2 13.1L27.8 17.2" fill="none" stroke="#fff" stroke-width="1.4" stroke-linejoin="round"/>
    <path d="M24.3 15.4v-1.3h1.3v1.9z" fill="#fff"/>
    <text x="18.1" y="30" font-size="15.4" font-weight="bold" fill="#fff" text-anchor="middle" textLength="17.2" lengthAdjust="spacingAndGlyphs">5d</text>
    <!-- undo -->
    <g fill="none" stroke="#5c5c5c" stroke-width="1.7" stroke-linecap="round">
      <path d="M246.500 19.300H248.800A5.100 5.100 0 1 1 245.600 28.300"/>
    </g>
    <path d="M241.700 19.400L247.600 15.200V23.600Z" fill="#5c5c5c"/>
    <!-- redo -->
    <g fill="none" stroke="#c6c6c6" stroke-width="1.700" stroke-linecap="round">
      <path d="M298.300 19.300H296A5.100 5.100 0 1 0 299.200 28.300"/>
    </g>
    <path d="M303.100 19.400L297.200 15.200V23.600Z" fill="#c6c6c6"/>
    <!-- camera -->
    <g fill="none" stroke="#676767" stroke-width="1.450" stroke-linejoin="round">
      <path d="M705.600 17.200H709.700L711 14.700H718.300L719.600 17.200H723.700V30H705.600Z"/>
      <circle cx="714.600" cy="23.400" r="3.500"/>
    </g>
    <!-- info -->
    <circle cx="763.200" cy="22.400" r="8.500" fill="none" stroke="#676767" stroke-width="1.450"/>
    <path d="M763.200 21.400V27.300" stroke="#676767" stroke-width="1.700"/>
    <circle cx="763.200" cy="18.400" r="1.100" fill="#676767"/>
    <!-- gear -->
    <g fill="none" stroke="#676767" stroke-width="1.450" stroke-linejoin="round">
      <path id="gear" d="M809.68 15.93L809.91 13.73L812.89 13.73L813.12 15.93L814.76 16.60L816.48 15.21L818.59 17.32L817.20 19.04L817.87 20.68L820.07 20.91L820.07 23.89L817.87 24.12L817.20 25.76L818.59 27.48L816.48 29.59L814.76 28.20L813.12 28.87L812.89 31.07L809.91 31.07L809.68 28.87L808.04 28.20L806.32 29.59L804.21 27.48L805.60 25.76L804.93 24.12L802.73 23.89L802.73 20.91L804.93 20.68L805.60 19.04L804.21 17.32L806.32 15.21L808.04 16.60Z"/>
      <circle cx="811.400" cy="22.400" r="3.300"/>
    </g>
    <!-- ruler -->
    <rect x="848" y="15.800" width="23.800" height="13.300" rx="1.600" fill="none" stroke="#676767" stroke-width="1.550"/>
    <path d="M852 28.500V24.500M854.600 28.500V22M857.200 28.500V24.500M859.800 28.500V22M862.400 28.500V24.500M865 28.500V22M867.600 28.500V24.500" stroke="#676767" stroke-width="1.100"/>
    <!-- duplicate -->
    <g fill="#fff" stroke="#676767" stroke-width="1.450" stroke-linejoin="round">
      <rect x="898.900" y="13.300" width="12.200" height="12.200" rx="1.500"/>
      <rect x="905.900" y="19.500" width="12.200" height="12.200" rx="1.500"/>
    </g>
    <path d="M912 22.700V28.500M909.100 25.600H914.900" stroke="#676767" stroke-width="1.300"/>
    <!-- share -->
    <g fill="none" stroke="#676767" stroke-width="1.450" stroke-linejoin="round" stroke-linecap="round">
      <path d="M954 20.700H952.300Q951 20.700 951 22V29.200Q951 30.500 952.300 30.500H960.900Q962.200 30.500 962.200 29.200V22Q962.200 20.700 960.900 20.700H959.200"/>
      <path d="M956.600 26V13.800M953.300 17L956.600 13.600L959.900 17"/>
    </g>
    <path d="M974.800 33.400V40.400H967.800Z" fill="#bdbdbd"/>
    <!-- user -->
    <circle cx="1004.800" cy="19.200" r="6.100" fill="#939393"/>
    <path d="M995 30.200Q995 27.800 997 27.800Q1004.800 31.500 1012.600 27.800Q1014.600 27.800 1014.600 30.200Q1014.600 36.200 1004.800 36.200Q995 36.200 995 30.200Z" fill="#939393"/>
    <path d="M1023.500 33.400V40.400H1016.500Z" fill="#bdbdbd"/>
    <path d="M217.900 33.200V40.400H210.700Z" fill="#bdbdbd"/>
  </svg>
  <div class="mode"><div class="b2">2D</div><div class="b3">3D</div></div>
</div>
<div class="panel">
  <svg style="position:absolute;left:0;top:0;z-index:3" width="240.8" height="544" viewBox="49.8 96 240.8 544">
    <!-- close -->
    <path d="M272.3 108.800L281.500 118M281.500 108.800L272.300 118" stroke="#4a4a4a" stroke-width="1.500" fill="none"/>
    <!-- search -->
    <circle cx="69" cy="146" r="4.200" fill="none" stroke="#bcbcbc" stroke-width="1.200"/>
    <path d="M66 149.200L62.300 153" stroke="#bcbcbc" stroke-width="1.300"/>
    <!-- ventanas -->
    <rect x="66.600" y="176.400" width="15.600" height="14.600" rx="1" fill="none" stroke="#6b6b6b" stroke-width="1.600"/>
    <path d="M69.600 179.300h4v3.600h-4zM75.300 179.300h4v3.600h-4zM69.600 184.600h4v3.600h-4zM75.300 184.600h4v3.600h-4z" fill="#6b6b6b"/>
    <!-- arcadas -->
    <path d="M65.800 206.800H83V223H80.900V209.400H67.900V223H65.800Z" fill="#6b6b6b"/>
    <!-- puertas (door) -->
    <path d="M72.500 239.700H67.400V252.200H72.500" fill="none" stroke="#6b6b6b" stroke-width="1.500"/>
    <path d="M72.200 238.600L82 237V255.500L72.200 253.600Z" fill="#6b6b6b"/>
    <circle cx="74.600" cy="246.900" r=".9" fill="#fff"/>
    <!-- tabicas -->
    <path d="M64.900 274.700L72.800 270.400V281.500L64.900 282.200Z" fill="#6b6b6b"/>
    <path d="M74.500 270.400L83.900 275.400V282.700L74.500 281.500Z" fill="#6b6b6b"/>
    <!-- escaleras -->
    <path d="M66.700 315.600V310.600H71.900V305.900H77V301.100H82.100V315.600Z" fill="#6b6b6b"/>
    <!-- columnas -->
    <path d="M66.700 335L74.700 330L82.800 335V336.700H66.700Z" fill="#6b6b6b"/>
    <path d="M68.700 338.200h2.300v5.500h-2.300zM73.600 338.200h2.300v5.500h-2.300zM78.500 338.200h2.300v5.500h-2.300z" fill="#6b6b6b"/>
    <rect x="66.700" y="345.300" width="16.100" height="1.900" fill="#6b6b6b"/>
    <!-- puertas (double) -->
    <path d="M66.700 365.300L73.700 363.900V377.500L66.700 377Z" fill="#6b6b6b"/>
    <path d="M75 363.900L82.100 365.300V377L75 377.500Z" fill="#6b6b6b"/>
    <circle cx="71.800" cy="372.400" r=".8" fill="#fff"/><circle cx="77" cy="372.400" r=".8" fill="#fff"/>
    <!-- vallas -->
    <path d="M67.300 397.500L68.600 396L69.900 397.500V409.600H67.300ZM73.200 397.500L74.500 396L75.800 397.500V409.600H73.200ZM79.100 397.500L80.400 396L81.700 397.500V409.600H79.100Z" fill="#6b6b6b"/>
    <path d="M66.600 400.700H82.400M66.600 405.800H82.400" stroke="#6b6b6b" stroke-width="1.600"/>
    <!-- tejados -->
    <path d="M65.500 434.900L74 428.700L83 434.800" fill="none" stroke="#6b6b6b" stroke-width="1.600" stroke-linecap="round" stroke-linejoin="round"/>
    <path d="M80.300 432.500V429.600" stroke="#6b6b6b" stroke-width="1.400"/>
    <!-- terrazas -->
    <path d="M66.100 462Q66.400 456.300 74.200 456.300Q82 456.300 82.300 462Z" fill="#6b6b6b"/>
    <path d="M74.200 462V471.400M70.600 465.700H77.800" stroke="#6b6b6b" stroke-width="1.100"/>
    <path d="M65.600 463.500h1.100v3.600h3.300v4.400h-4.400zM82.800 463.500h-1.100v3.600h-3.300v4.400h4.400z" fill="#6b6b6b"/>
  </svg>
  <div class="hd">construcciones</div>
  <div class="search"><div class="caret"></div><span>Search for an item</span></div>
  <div class="item" style="top:73px"><span style="letter-spacing:-0.19px">Ventanas</span></div>
  <div class="item" style="top:104.1px"><span style="letter-spacing:-0.34px">Arcadas</span></div>
  <div class="item" style="top:135.2px"><span style="letter-spacing:-0.33px">Puertas</span></div>
  <div class="item" style="top:166.3px"><span style="letter-spacing:-0.40px">Tabicas</span></div>
  <div class="item" style="top:197.4px"><span style="letter-spacing:-0.60px">Escaleras</span></div>
  <div class="item" style="top:228.5px"><span style="letter-spacing:-0.12px">Columnas</span></div>
  <div class="item" style="top:259.6px"><span style="letter-spacing:-0.33px">Puertas</span></div>
  <div class="item" style="top:290.7px"><span style="letter-spacing:-0.36px">Vallas, cercas</span></div>
  <div class="item" style="top:321.8px"><span style="letter-spacing:-0.26px">Tejados</span></div>
  <div class="item" style="top:352.9px"><span style="letter-spacing:-0.47px">Terrazas</span></div>
</div>
<div class="box" style="left:2px;top:200.6px;width:38.5px;height:47px"></div>
<div class="box" style="left:2px;top:255.8px;width:38.5px;height:229.7px">
  <div style="position:absolute;left:0;top:38.6px;width:38.5px;height:38.2px;background:#1bb067"></div>
  <div style="position:absolute;left:0;top:152.2px;width:38.5px;height:1px;background:#e4e4e4"></div>
</div>
<div class="box" style="left:994.3px;top:564.5px;width:29px;height:26px"></div>
<div class="box" style="left:994.3px;top:599px;width:29px;height:26.8px"></div>
<div class="box" style="left:994.3px;top:632px;width:29px;height:54.5px"><div style="position:absolute;left:0;top:28px;width:29px;height:1px;background:#e6e6e6"></div></div>
<svg style="position:absolute;left:0;top:195px" width="46" height="300" viewBox="0 195 46 300">
  <!-- cart -->
  <path d="M13.300 216.400H15.700L17.400 225.800H27.600" fill="none" stroke="#676767" stroke-width="1.500" stroke-linecap="round" stroke-linejoin="round"/>
  <path d="M16.100 218.400H29.700L28.200 225H17.300Z" fill="#676767"/>
  <path d="M17.600 227.400H27.400" stroke="#676767" stroke-width="1.300"/>
  <circle cx="18.900" cy="229.800" r="1.700" fill="#676767"/><circle cx="26.100" cy="229.800" r="1.700" fill="#676767"/>
  <!-- cube -->
  <path d="M20.700 266.500L28.800 271V279.500L20.700 283.800L12.900 279.500V271Z" fill="#676767"/>
  <path d="M20.700 266V275.600L12.500 280M20.700 275.600L29.200 280" stroke="#fff" stroke-width="1.700" fill="none"/>
  <path d="M15.400 279V272.600L18 271.200V277.500Z" fill="#fff"/>
  <!-- door (active) -->
  <path d="M18 306.900H13.700V319.900H18" fill="none" stroke="#fff" stroke-width="1.500"/>
  <path d="M17.400 305.700L28.600 304V323L17.400 321.200Z" fill="#fff"/>
  <circle cx="20.700" cy="314.600" r=".9" fill="#1bb067"/>
  <!-- sofa -->
  <rect x="15.900" y="343.900" width="10.200" height="7.700" rx="1.600" fill="#676767"/>
  <path d="M12.200 350.600Q12.200 349.400 13.400 349.400H14.600Q15.800 349.400 15.800 350.600V353H26.200V350.600Q26.200 349.400 27.400 349.400H28.600Q29.800 349.400 29.800 350.600V358.900H27.600V357.100H14.400V358.900H12.200Z" fill="#676767"/>
  <!-- tree -->
  <path d="M20.800 380.300Q23.800 380.300 24.700 382.700Q27.500 383.400 27.500 386.200Q27.500 388 26.200 389Q26.800 392.300 23.300 393Q22.500 393.400 22.300 393.300V397.600H19.800V393.400Q17 393.700 15.800 391.300Q13.900 390.400 14.300 388.200Q13.700 385.200 16.400 384Q16.800 380.600 20.800 380.300Z" fill="#676767"/>
  <!-- clock -->
  <circle cx="20.700" cy="429.400" r="8.400" fill="#676767"/>
  <path d="M21.400 424.300V431H16.600" stroke="#fff" stroke-width="1.700" fill="none"/>
  <!-- heart home -->
  <path d="M20.800 474.600L13.900 467.600Q11.700 464.600 13.700 461.700Q16.300 458.700 19.500 460.700L20.800 461.900L22.100 460.700Q25.300 458.700 27.900 461.700Q29.900 464.600 27.700 467.600Z" fill="#676767"/>
  <path d="M20.800 463.300L24.300 466.300H23.300V469.500H21.700V467.300H19.900V469.500H18.300V466.300H17.300Z" fill="#fff"/>
</svg>
<svg style="position:absolute;left:990px;top:560px" width="34" height="132" viewBox="990 560 34 132">
  <path d="M1007 571.900H1002.500V584H1014.600V579.500" fill="none" stroke="#4f4f4f" stroke-width="1.400"/>
  <path d="M1009.500 571.700H1014.800V577M1014.600 571.900L1007 579.500" fill="none" stroke="#4f4f4f" stroke-width="1.400"/>
  <circle cx="1008.500" cy="612.300" r="5.300" fill="none" stroke="#4f4f4f" stroke-width="1.400"/>
  <circle cx="1008.500" cy="612.300" r="2" fill="#4f4f4f"/>
  <path d="M1008.500 604.200V607.500M1008.500 617.100V620.400M1000.400 612.300H1003.700M1013.300 612.300H1016.600" stroke="#4f4f4f" stroke-width="1.400"/>
  <path d="M1008.500 641.200V652.200M1003 646.700H1014" stroke="#4f4f4f" stroke-width="1.500"/>
  <path d="M1003 675.400H1014" stroke="#4f4f4f" stroke-width="1.500"/>
</svg>

</body></html>
